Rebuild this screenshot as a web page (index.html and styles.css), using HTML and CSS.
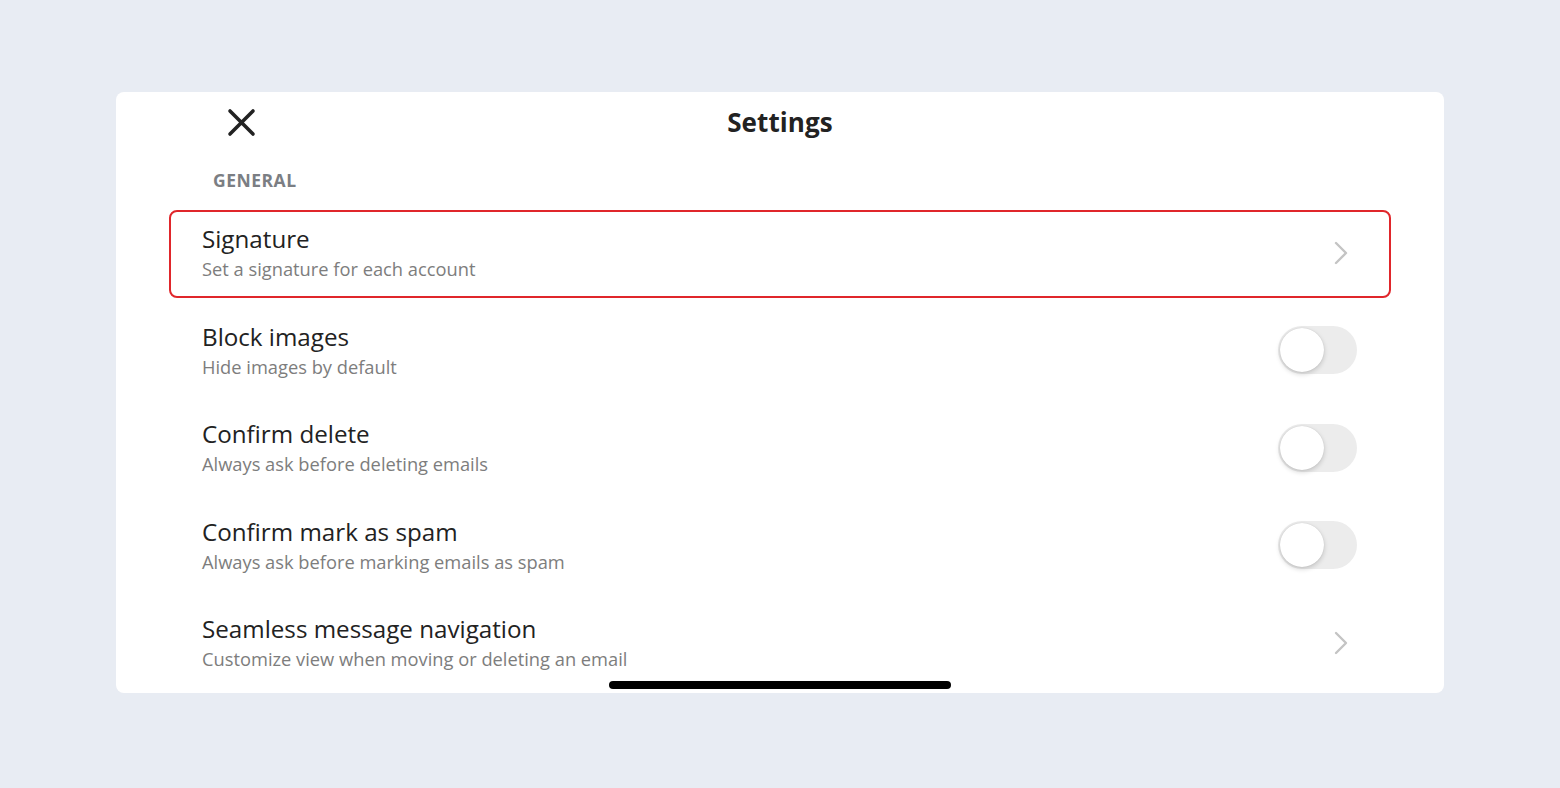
FILE: index.html
```html
<!DOCTYPE html>
<html>
<head>
<meta charset="utf-8">
<link rel="stylesheet" href="styles.css">
</head>
<body>
<div class="card">
  <header class="header">
    <button class="close" aria-label="Close">
      <svg width="30" height="30" viewBox="0 0 30 30"><path d="M3 3 L26 26 M26 3 L3 26" stroke="#222" stroke-width="3.6" stroke-linecap="round" fill="none"/></svg>
    </button>
    <h1 class="title">Settings</h1>
  </header>
  <div class="section">GENERAL</div>
  <div class="list">
    <div class="row selected">
      <div class="text"><div class="name">Signature</div><div class="desc">Set a signature for each account</div></div>
      <svg class="chev" width="16" height="24" viewBox="0 0 16 24"><path d="M3 2 L13 12 L3 22" stroke="#c4c4c4" stroke-width="2.4" fill="none" stroke-linecap="round" stroke-linejoin="round"/></svg>
    </div>
    <div class="row">
      <div class="text"><div class="name">Block images</div><div class="desc">Hide images by default</div></div>
      <div class="toggle"><div class="knob"></div></div>
    </div>
    <div class="row">
      <div class="text"><div class="name">Confirm delete</div><div class="desc">Always ask before deleting emails</div></div>
      <div class="toggle"><div class="knob"></div></div>
    </div>
    <div class="row">
      <div class="text"><div class="name">Confirm mark as spam</div><div class="desc">Always ask before marking emails as spam</div></div>
      <div class="toggle"><div class="knob"></div></div>
    </div>
    <div class="row">
      <div class="text"><div class="name">Seamless message navigation</div><div class="desc">Customize view when moving or deleting an email</div></div>
      <svg class="chev" width="16" height="24" viewBox="0 0 16 24"><path d="M3 2 L13 12 L3 22" stroke="#c4c4c4" stroke-width="2.4" fill="none" stroke-linecap="round" stroke-linejoin="round"/></svg>
    </div>
  </div>
  <div class="home-bar"></div>
</div>
</body>
</html>
```
FILE: styles.css
```css
html, body {
  margin: 0;
  padding: 0;
}
body {
  background: #e8ecf3;
  font-family: "Open Sans", "Noto Sans", sans-serif;
  width: 1560px;
  height: 788px;
  overflow: hidden;
}
.card {
  position: relative;
  margin: 92px 0 0 116px;
  width: 1328px;
  height: 601px;
  background: #fff;
  border-radius: 8px;
  overflow: hidden;
  box-sizing: border-box;
  padding: 0 53px;
}
.header {
  position: relative;
  height: 60px;
  display: flex;
  align-items: center;
  justify-content: center;
}
.close {
  position: absolute;
  left: 58px;
  top: 16px;
  width: 30px;
  height: 30px;
  padding: 0;
  border: 0;
  background: none;
  display: flex;
}
.title {
  margin: 0;
  font-size: 26px;
  font-weight: 700;
  color: #222;
  letter-spacing: 0.1px;
}
.section {
  margin: 16px 0 0 44px;
  font-size: 17.5px;
  font-weight: 700;
  color: #7b7e83;
  line-height: 24px;
  letter-spacing: 0.5px;
}
.list {
  margin-top: 18px;
  display: flex;
  flex-direction: column;
  gap: 9.5px;
}
.row {
  height: 88px;
  box-sizing: border-box;
  border: 2px solid transparent;
  border-radius: 8px;
  padding: 12px 32px 0 31px;
  display: flex;
  justify-content: space-between;
  align-items: center;
}
.row.selected {
  border-color: #e0262b;
}
.text {
  align-self: flex-start;
}
.name {
  font-size: 24.2px;
  line-height: 30px;
  color: #222;
}
.desc {
  font-size: 18.3px;
  line-height: 30px;
  color: #7d7d7d;
}
.chev {
  margin-right: 8px;
  margin-top: -15px;
}
.toggle {
  margin-top: -15px;
  width: 79px;
  height: 48px;
  border-radius: 24px;
  background: #ececec;
  position: relative;
  box-sizing: border-box;
  padding: 2px;
}
.knob {
  width: 44px;
  height: 44px;
  border-radius: 50%;
  background: #fff;
  box-shadow: 0 2px 5px rgba(0,0,0,0.18), 0 0 1px rgba(0,0,0,0.15);
}
.home-bar {
  position: absolute;
  left: 493px;
  bottom: 4px;
  width: 342px;
  height: 8px;
  border-radius: 4px;
  background: #000;
}
```
